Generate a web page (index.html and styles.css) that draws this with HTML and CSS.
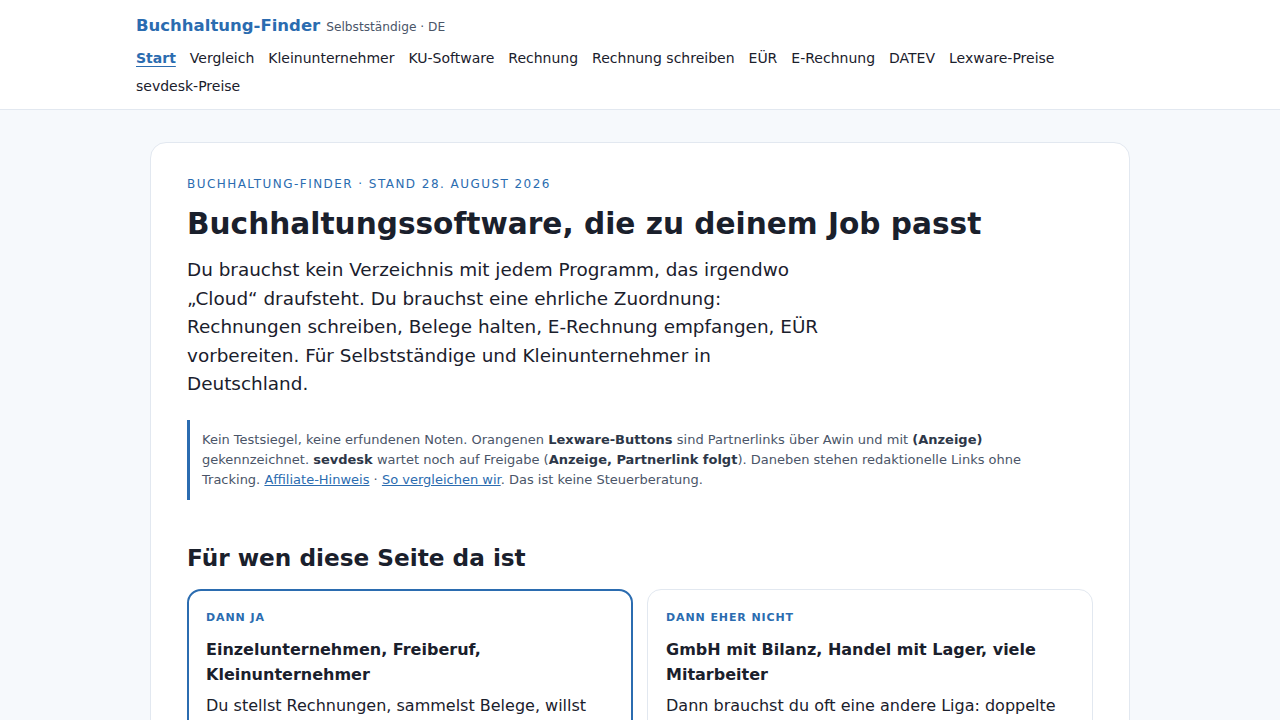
FILE: index.html
```html
<!DOCTYPE html>
<html lang="de">
<head>
<meta charset="utf-8">
<title>Buchhaltung-Finder</title>
<link rel="stylesheet" href="styles.css">
</head>
<body>
<header class="site-header">
  <div class="wrap">
    <div class="brand-row">
      <a class="brand" href="#">Buchhaltung-Finder</a>
      <span class="brand-sub">Selbstständige · DE</span>
    </div>
    <nav class="nav">
      <a class="active" href="#">Start</a>
      <a href="#">Vergleich</a>
      <a href="#">Kleinunternehmer</a>
      <a href="#">KU-Software</a>
      <a href="#">Rechnung</a>
      <a href="#">Rechnung schreiben</a>
      <a href="#">EÜR</a>
      <a href="#">E-Rechnung</a>
      <a href="#">DATEV</a>
      <a href="#">Lexware-Preise</a>
      <a href="#">sevdesk-Preise</a>
    </nav>
  </div>
</header>
<main class="main">
  <section class="card">
    <p class="eyebrow">Buchhaltung-Finder · Stand 28. August 2026</p>
    <h1>Buchhaltungssoftware, die zu deinem Job passt</h1>
    <p class="lead">Du brauchst kein Verzeichnis mit jedem Programm, das irgendwo „Cloud“ draufsteht. Du brauchst eine ehrliche Zuordnung: Rechnungen schreiben, Belege halten, E-Rechnung empfangen, EÜR vorbereiten. Für Selbstständige und Kleinunternehmer in Deutschland.</p>
    <div class="note">Kein Testsiegel, keine erfundenen Noten. Orangenen <strong>Lexware-Buttons</strong> sind Partnerlinks über Awin und mit <strong>(Anzeige)</strong> gekennzeichnet. <strong>sevdesk</strong> wartet noch auf Freigabe (<strong>Anzeige, Partnerlink folgt</strong>). Daneben stehen redaktionelle Links ohne Tracking. <a href="#">Affiliate-Hinweis</a> · <a href="#">So vergleichen wir</a>. Das ist keine Steuerberatung.</div>
    <h2>Für wen diese Seite da ist</h2>
    <div class="fit-grid">
      <div class="fit fit-yes">
        <p class="fit-label">Dann ja</p>
        <h3>Einzelunternehmen, Freiberuf, Kleinunternehmer</h3>
        <p class="fit-text">Du stellst Rechnungen, sammelst Belege, willst deine EÜR sauber vorbereiten und brauchst keine Bilanz.</p>
      </div>
      <div class="fit">
        <p class="fit-label">Dann eher nicht</p>
        <h3>GmbH mit Bilanz, Handel mit Lager, viele Mitarbeiter</h3>
        <p class="fit-text">Dann brauchst du oft eine andere Liga: doppelte Buchführung, Lohn, Warenwirtschaft und eine Kanzlei.</p>
      </div>
    </div>
  </section>
</main>
</body>
</html>
```
FILE: styles.css
```css
* { box-sizing: border-box; }
html, body { margin: 0; padding: 0; }
body {
  font-family: "DejaVu Sans", Verdana, sans-serif;
  color: #1a202c;
  background: #f6f9fc;
}
a { color: inherit; text-decoration: none; }
.site-header {
  background: #ffffff;
  border-bottom: 1px solid #e2e8f0;
}
.wrap {
  width: 1008px;
  margin: 0 auto;
  padding: 16px 0 9px;
}
.brand-row {
  display: flex;
  align-items: baseline;
  gap: 6px;
}
.brand {
  font-size: 16.5px;
  font-weight: 700;
  color: #2b6cb0;
}
.brand-sub {
  font-size: 12.2px;
  color: #4a5568;
}
.nav {
  display: flex;
  flex-wrap: wrap;
  column-gap: 14px;
  margin-top: 9px;
  font-size: 14px;
  line-height: 28px;
}
.nav a { color: #1a202c; }
.nav a.active {
  color: #2b6cb0;
  font-weight: 700;
  text-decoration: underline;
  text-underline-offset: 3px;
}
.main {
  padding: 32px 0 40px;
}
.card {
  width: 980px;
  margin: 0 auto;
  background: #ffffff;
  border: 1px solid #e2e8f0;
  border-radius: 16px;
  padding: 31px 36px 36px;
}
.eyebrow {
  margin: 0;
  font-size: 12px;
  letter-spacing: 1.45px;
  text-transform: uppercase;
  color: #2b6cb0;
  line-height: 20px;
}
h1 {
  margin: 10px 0 0;
  font-size: 29.6px;
  line-height: 40px;
  font-weight: 700;
  color: #1a202c;
}
.lead {
  margin: 12px 0 0;
  max-width: 636px;
  font-size: 18.4px;
  line-height: 28.6px;
  color: #1a202c;
}
.note {
  margin-top: 21px;
  max-width: 860px;
  border-left: 3px solid #2b6cb0;
  padding: 10px 0 10px 12px;
  font-size: 13px;
  line-height: 20px;
  color: #4a5568;
}
.note strong { color: #2d3748; }
.note a {
  color: #2b6cb0;
  text-decoration: underline;
}
h2 {
  margin: 41px 0 0;
  font-size: 23.2px;
  line-height: 34px;
  font-weight: 700;
  color: #1a202c;
}
.fit-grid {
  margin-top: 14px;
  display: grid;
  grid-template-columns: 1fr 1fr;
  gap: 14px;
}
.fit {
  border: 1px solid #e2e8f0;
  border-radius: 14px;
  padding: 19px 18px 18px;
  background: #ffffff;
}
.fit-yes {
  border: 2px solid #2b6cb0;
  padding: 18px 17px 17px;
}
.fit-label {
  margin: 0;
  font-size: 11px;
  font-weight: 700;
  letter-spacing: 0.9px;
  text-transform: uppercase;
  color: #2b6cb0;
  line-height: 18px;
}
.fit h3 {
  margin: 10px 0 0;
  font-size: 16px;
  line-height: 25px;
  font-weight: 700;
  color: #1a202c;
}
.fit-text {
  margin: 6px 0 0;
  font-size: 16px;
  line-height: 25px;
  color: #1a202c;
}
```
